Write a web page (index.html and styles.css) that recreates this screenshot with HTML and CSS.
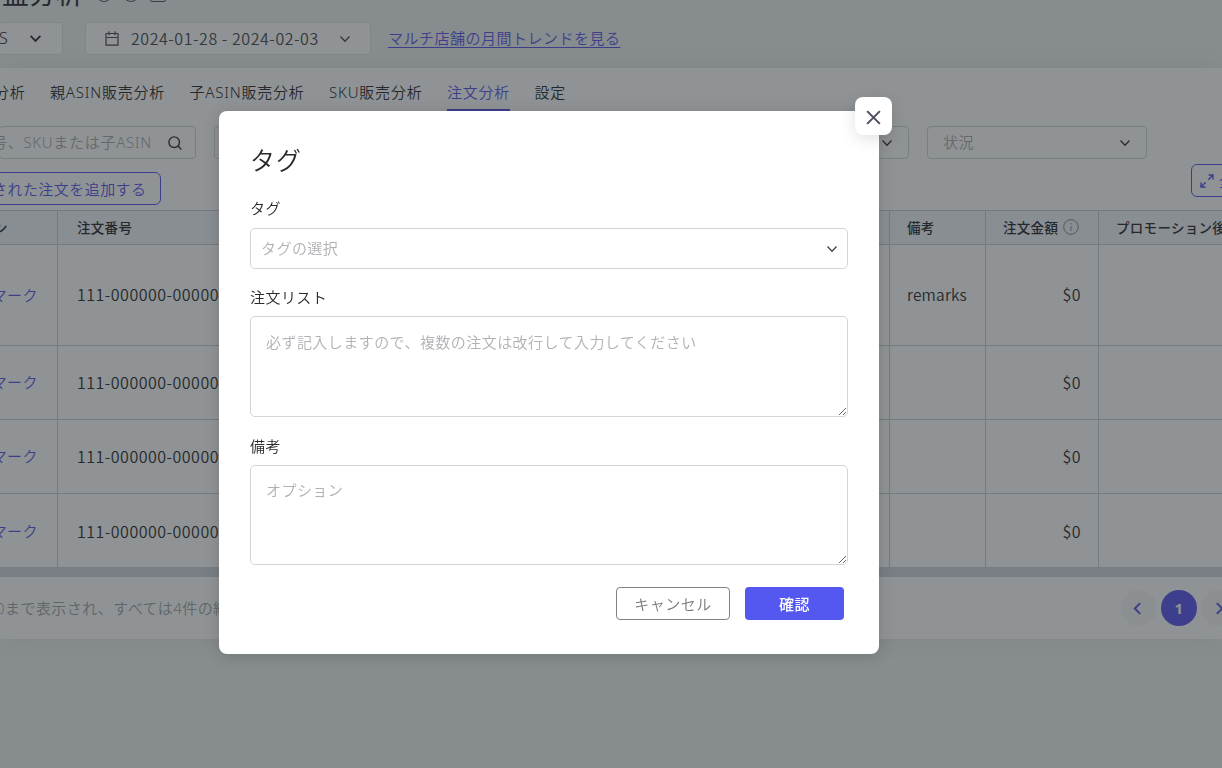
FILE: index.html
```html
<!DOCTYPE html>
<html lang="ja">

<head>
  <meta charset="UTF-8" />
  <title>注文分析</title>
  <link rel="stylesheet" href="styles.css">
</head>

<body>
  <div class="page">
    <div class="title-row">
      <h1>益分析</h1>
      <span class="ring"></span>
      <span class="ring"></span>
      <span class="ring square"></span>
    </div>

    <div class="toolbar">
      <div class="box shop">
        <span>S</span>
        <svg class="chevron bold" viewBox="0 0 12 12"><path d="M1.5 3.5 6 8.2l4.5-4.7" /></svg>
      </div>
      <div class="box dates">
        <svg class="calendar" viewBox="0 0 14 15"><path d="M1 2.5h12v11.7H1zM1 6.5h12M4 .3v4M10 .3v4" /></svg>
        <span>2024-01-28 - 2024-02-03</span>
        <svg class="chevron" viewBox="0 0 12 12"><path d="M1.5 3.5 6 8.2l4.5-4.7" /></svg>
      </div>
      <a class="trend" href="#">マルチ店舗の月間トレンドを見る</a>
    </div>

    <div class="card">
      <nav class="tabs">
        <a>分析</a>
        <a>親ASIN販売分析</a>
        <a>子ASIN販売分析</a>
        <a>SKU販売分析</a>
        <a class="active">注文分析</a>
        <a>設定</a>
      </nav>

      <div class="filters">
        <div class="filter search">
          <span class="search-text">号、SKUまたは子ASIN</span>
          <svg class="magnifier" viewBox="0 0 14 14"><circle cx="6.2" cy="6.2" r="5.3" /><path d="m10 10 3.4 3.4" /></svg>
        </div>
        <div class="filter wide">
          <span></span>
          <svg class="chevron" viewBox="0 0 12 12"><path d="M1.5 3.5 6 8.2l4.5-4.7" /></svg>
        </div>
        <div class="filter status">
          <span>状況</span>
          <svg class="chevron" viewBox="0 0 12 12"><path d="M1.5 3.5 6 8.2l4.5-4.7" /></svg>
        </div>
      </div>

      <div class="actions">
        <button class="outline add">された注文を追加する</button>
        <button class="outline full">
          <svg viewBox="0 0 14 14"><path d="M8.5 1H13v4.5M13 1 8.3 5.7M5.5 13H1V8.5M1 13l4.7-4.7" /></svg>
          <span>全画面</span>
        </button>
      </div>

      <div class="table">
        <div class="row head">
          <div class="cell">ン</div>
          <div class="cell">注文番号</div>
          <div class="cell">備考</div>
          <div class="cell">注文金額
            <svg class="info" viewBox="0 0 16 16"><circle cx="8" cy="8" r="7.3" /><path d="M8 7v5M8 4v1.3" /></svg>
          </div>
          <div class="cell">プロモーション後</div>
        </div>
        <div class="row tall">
          <div class="cell mark">マーク</div>
          <div class="cell">111-000000-00000</div>
          <div class="cell remark">remarks</div>
          <div class="cell money">$0</div>
          <div class="cell"></div>
        </div>
        <div class="row">
          <div class="cell mark">マーク</div>
          <div class="cell">111-000000-00000</div>
          <div class="cell"></div>
          <div class="cell money">$0</div>
          <div class="cell"></div>
        </div>
        <div class="row">
          <div class="cell mark">マーク</div>
          <div class="cell">111-000000-00000</div>
          <div class="cell"></div>
          <div class="cell money">$0</div>
          <div class="cell"></div>
        </div>
        <div class="row last">
          <div class="cell mark">マーク</div>
          <div class="cell">111-000000-00000</div>
          <div class="cell"></div>
          <div class="cell money">$0</div>
          <div class="cell"></div>
        </div>
      </div>
      <div class="scrollbar"></div>

      <div class="footer">
        <span class="count">0まで表示され、すべては4件の結</span>
        <div class="pager">
          <span class="dot"><svg viewBox="0 0 12 12"><path d="M8.5 1 3.5 6l5 5" /></svg></span>
          <span class="dot current">1</span>
          <span class="dot next"><svg viewBox="0 0 12 12"><path d="m3.5 1 5 5-5 5" /></svg></span>
        </div>
      </div>
    </div>
  </div>

  <div class="overlay">
    <div class="modal">
      <button class="close"><svg viewBox="0 0 16 16"><path d="m1.2 1.2 13.6 13.6M14.8 1.2 1.2 14.8" /></svg></button>
      <h2>タグ</h2>
      <label>タグ</label>
      <div class="select">
        <span>タグの選択</span>
        <svg class="chevron" viewBox="0 0 12 12"><path d="M1.5 3.5 6 8.2l4.5-4.7" /></svg>
      </div>
      <label class="low">注文リスト</label>
      <textarea placeholder="必ず記入しますので、複数の注文は改行して入力してください"></textarea>
      <label class="low">備考</label>
      <textarea class="note" placeholder="オプション"></textarea>
      <div class="buttons">
        <button class="cancel">キャンセル</button>
        <button class="confirm">確認</button>
      </div>
    </div>
  </div>
</body>

</html>
```
FILE: styles.css
```css
* {
  box-sizing: border-box;
}

body {
  margin: 0;
  height: 768px;
  overflow: hidden;
  background-color: #eff0f2;
  color: #2b2b2e;
  font-family: "Noto Sans", "Noto Sans CJK JP", sans-serif;
  font-size: 15px;
  font-weight: 350;
  letter-spacing: 0.45px;
  white-space: nowrap;
}

button,
textarea {
  font: inherit;
  letter-spacing: inherit;
}

svg {
  fill: none;
  stroke: currentColor;
  stroke-width: 1.4;
  flex-shrink: 0;
}

.chevron {
  width: 12px;
  height: 12px;
  stroke-width: 1.3;
}

.chevron.bold {
  width: 13px;
  height: 13px;
  stroke-width: 1.6;
}

/* page behind the dialog */
.page {
  display: flow-root;
  width: 1222px;
  height: 768px;
  overflow: hidden;
}

.title-row {
  display: flex;
  align-items: flex-end;
  height: 27px;
  margin-top: -20px;
  gap: 11px;
}

.title-row h1 {
  margin: 0 2px 0 2px;
  font-size: 27px;
  line-height: 27px;
  font-weight: 400;
  letter-spacing: 0;
}

.ring {
  width: 16px;
  height: 16px;
  margin-bottom: 5px;
  border: 1.5px solid #55555a;
  border-radius: 50%;
}

.ring.square {
  border-radius: 2px;
}

.toolbar {
  display: flex;
  align-items: center;
  height: 33px;
  margin-top: 15px;
}

.box {
  display: flex;
  align-items: center;
  height: 33px;
  background-color: #fff;
  border: 1px solid #e0e2e5;
  border-radius: 4px;
}

.shop {
  width: 64px;
  margin-left: -1px;
  border-left: 0;
  gap: 21px;
  font-size: 16px;
}

.shop span {
  margin-bottom: 2px;
}

.dates {
  width: 286px;
  margin-left: 22px;
  padding-left: 19px;
  color: #4a4a4e;
}

.dates span {
  width: 188px;
  margin: 0 20px 2px 12px;
  font-family: "Noto Sans CJK JP", sans-serif;
  font-size: 16px;
  letter-spacing: 0.55px;
}

.calendar {
  width: 14px;
  height: 15px;
  stroke-width: 1.2;
}

.trend {
  margin: -2px 0 0 17px;
  color: #5a55e8;
  letter-spacing: 0.5px;
  text-underline-offset: 3px;
}

.card {
  margin-top: 13px;
  height: 571px;
  background-color: #fff;
  box-shadow: 0 0 24px rgba(0, 0, 0, 0.06);
}

.tabs {
  display: flex;
  height: 43px;
  gap: 24.4px;
  margin-left: -6px;
  line-height: 48px;
  letter-spacing: 0.8px;
}

.tabs .active {
  color: #5a55e8;
  border-bottom: 2px solid #5a55e8;
}

.filters {
  display: flex;
  gap: 18px;
  margin-top: 15px;
}

.filter {
  display: flex;
  align-items: center;
  justify-content: space-between;
  height: 33px;
  padding: 0 15px;
  border: 1px solid #d2d4d6;
  border-radius: 4px;
  color: #a9abad;
}

.filter span {
  margin-bottom: 2px;
}

.filter svg {
  color: #333;
}

.search {
  width: 197px;
  margin-left: -1px;
  padding: 0 13px 0 0;
}

.search-text {
  margin-left: -8px;
  letter-spacing: 0.7px;
}

.magnifier {
  width: 14px;
  height: 14px;
}

.wide {
  width: 695px;
}

.status {
  width: 220px;
}

.actions {
  display: flex;
  justify-content: space-between;
  height: 51px;
  padding-top: 5px;
}

.outline {
  display: flex;
  align-items: center;
  height: 33px;
  background: transparent;
  border: 1px solid #5a55e8;
  border-radius: 6px;
  color: #5a55e8;
}

.add {
  width: 170px;
  margin: 8px 0 0 -9px;
  padding: 0;
}

.full {
  width: 90px;
  margin-right: -59px;
  padding: 0 8px;
  gap: 5px;
}

.full svg {
  width: 14px;
  height: 14px;
}

.table {
  width: 1300px;
  border-top: 1px solid #c9ccd0;
}

.row {
  display: grid;
  grid-template-columns: 58px 832px 96px 113px 201px;
  height: 74px;
  font-family: "Noto Sans CJK JP", sans-serif;
  font-size: 16px;
}

.row.tall {
  height: 101px;
}

.row.last {
  height: 73px;
}

.row.head {
  height: 34px;
  background-color: #f3f4fb;
  font-size: 13.5px;
  font-weight: 500;
  letter-spacing: 0.3px;
}

.cell {
  display: flex;
  align-items: center;
  padding: 0 17px 2px;
  border-right: 1px solid #c9ccd0;
  border-bottom: 1px solid #c9ccd0;
}

.row.last .cell {
  padding-bottom: 0;
  border-bottom: 0;
}

.cell:nth-child(2) {
  padding-left: 19px;
  letter-spacing: 0.5px;
}

.cell:first-child {
  padding-left: 0;
}

.head .cell:nth-child(2) {
  letter-spacing: 0.3px;
}

.head .cell:first-child {
  text-indent: -6px;
}

.cell.mark {
  justify-content: flex-end;
  padding-right: 19px;
  font-size: 15px;
  color: #5a55e8;
}

.cell.remark {
  font-size: 15.5px;
  letter-spacing: 0.2px;
}

.cell.money {
  justify-content: flex-end;
}

.info {
  width: 16px;
  height: 16px;
  margin-left: 5px;
  stroke-width: 1;
  color: #8a8c90;
}

.scrollbar {
  height: 10px;
  background-color: #d3d5dd;
}

.footer {
  display: flex;
  align-items: center;
  justify-content: space-between;
  height: 62px;
}

.count {
  margin: 0 0 2px -4px;
  color: #a0a2a4;
}

.pager {
  display: flex;
  gap: 4px;
  margin-right: -15px;
}

.dot {
  display: flex;
  align-items: center;
  justify-content: center;
  width: 36px;
  height: 36px;
  border-radius: 50%;
  background-color: #f6f7f8;
  color: #5a55e8;
}

.dot svg {
  width: 13px;
  height: 13px;
  margin-right: 3px;
  stroke-width: 1.8;
}

.dot.next svg {
  margin: 0 0 0 1px;
}

.dot.current {
  background-color: #5a55ee;
  color: #fff;
  font-weight: 700;
}

/* dialog */
.overlay {
  position: fixed;
  inset: 0;
  padding: 111px 0 0 219px;
  background-color: rgba(31, 39, 43, 0.5);
}

.modal {
  position: relative;
  width: 660px;
  height: 543px;
  padding: 31px;
  background-color: #fff;
  border-radius: 8px;
  box-shadow: 0 2px 16px rgba(0, 0, 0, 0.15);
}

.close {
  position: absolute;
  top: -14px;
  right: -13px;
  display: flex;
  align-items: center;
  justify-content: center;
  width: 37px;
  height: 38px;
  padding: 3px 0 0;
  background-color: #fff;
  border: 0;
  border-radius: 8px;
  box-shadow: 0 4px 16px rgba(0, 0, 0, 0.12);
  color: #50505f;
}

.close svg {
  width: 15px;
  height: 15px;
  stroke-width: 2.2;
}

.modal h2 {
  margin: 0 0 18px;
  font-size: 25px;
  font-weight: 350;
  line-height: 36px;
  letter-spacing: 1px;
}

.modal label {
  display: block;
  height: 32px;
  line-height: 25px;
}

.modal label.low {
  line-height: 27px;
}

.select {
  display: flex;
  align-items: center;
  justify-content: space-between;
  width: 598px;
  height: 41px;
  margin-bottom: 15px;
  padding: 0 9px 0 10px;
  border: 1px solid #d4d5d7;
  border-radius: 5px;
  color: #b0b1b5;
}

.select span {
  margin-bottom: 2px;
}

.select svg {
  color: #444;
}

.modal textarea {
  display: block;
  width: 598px;
  height: 101px;
  margin: 0 0 16px;
  padding: 14px 15px;
  border: 1px solid #d4d5d7;
  border-radius: 5px;
}

.modal textarea.note {
  height: 100px;
  padding-top: 13px;
}

.modal textarea::placeholder {
  color: #b0b1b5;
}

.buttons {
  display: flex;
  justify-content: flex-end;
  gap: 15px;
  margin: 22px 4px 0 0;
}

.buttons button {
  height: 33px;
  padding: 0;
  border-radius: 4px;
}

.cancel {
  width: 114px;
  background-color: #fff;
  border: 1px solid #808285;
  color: #77797c;
}

.confirm {
  width: 99px;
  background-color: #5457f0;
  border: 0;
  color: #fff;
}

.buttons .confirm {
  font-weight: 500;
}
```
